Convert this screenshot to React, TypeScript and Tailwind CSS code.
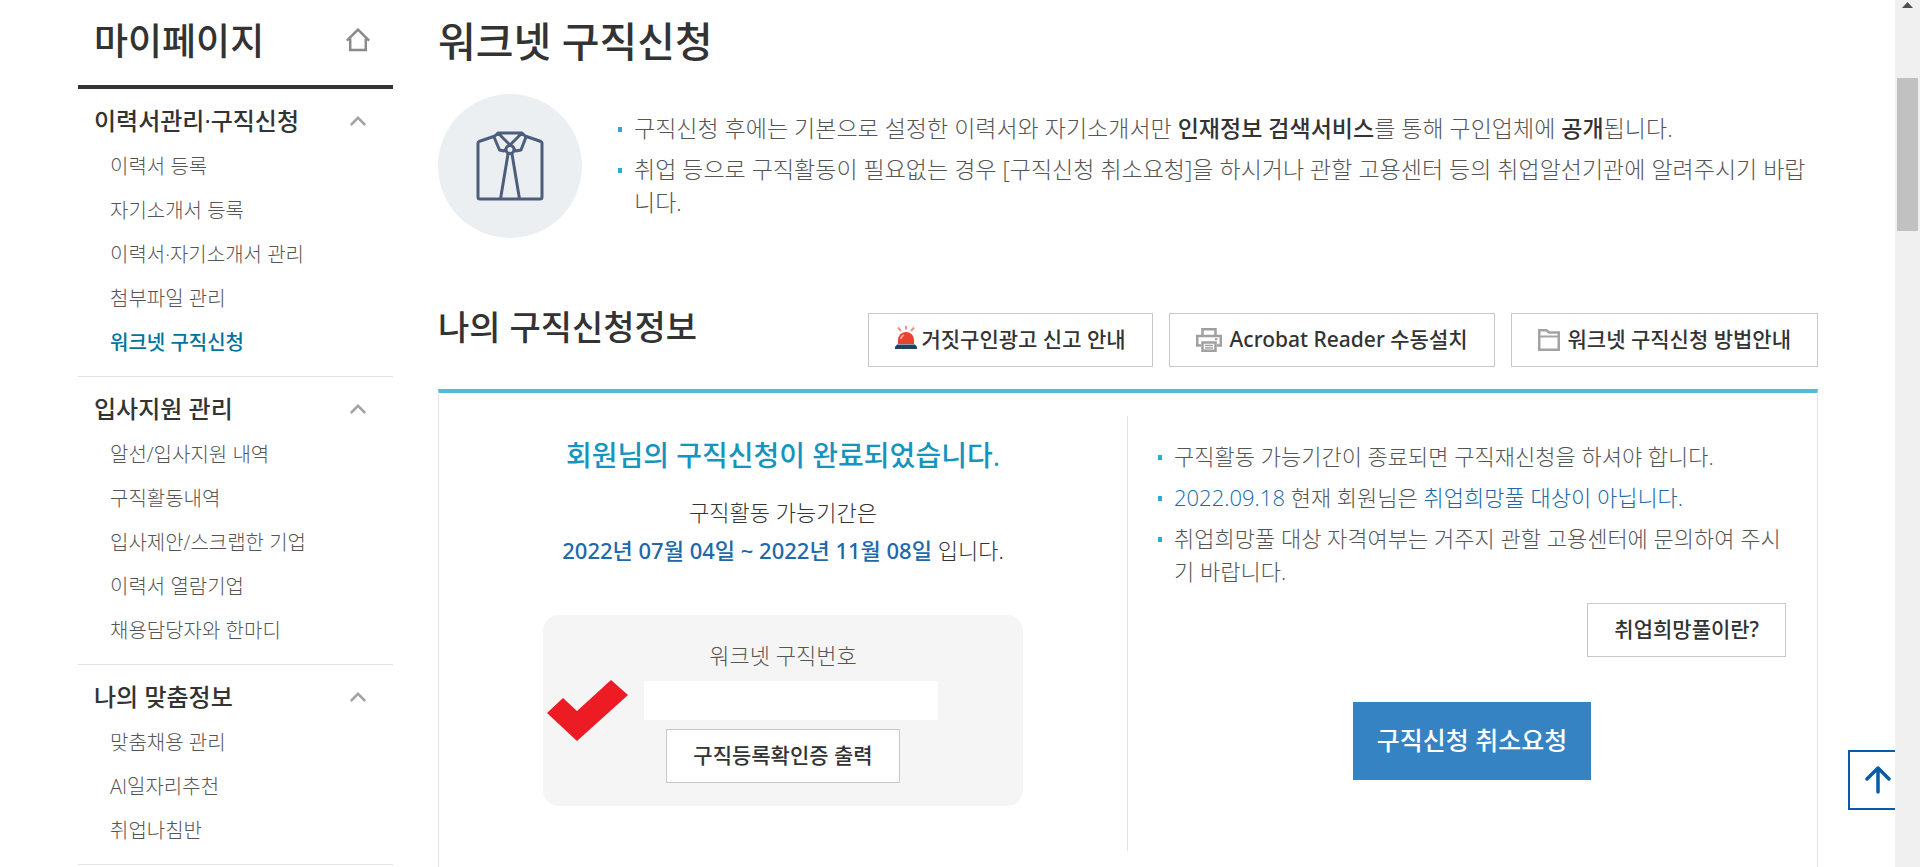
import type { ReactNode } from 'react';

type Section = { title: string; items: string[]; active?: string };

const sections: Section[] = [
  {
    title: '이력서관리·구직신청',
    items: ['이력서 등록', '자기소개서 등록', '이력서·자기소개서 관리', '첨부파일 관리', '워크넷 구직신청'],
    active: '워크넷 구직신청',
  },
  {
    title: '입사지원 관리',
    items: ['알선/입사지원 내역', '구직활동내역', '입사제안/스크랩한 기업', '이력서 열람기업', '채용담당자와 한마디'],
  },
  { title: '나의 맞춤정보', items: ['맞춤채용 관리', 'AI일자리추천', '취업나침반'] },
];

function HomeIcon() {
  return (
    <svg width="24" height="24" viewBox="0 0 24 24" fill="none" stroke="#8a8a8a" strokeWidth="2.500">
      <path d="M0.8 12.6 12 1.6 23.2 12.6" />
      <path d="M4.200 10.5V22h15.600V10.5" />
    </svg>
  );
}

function Chevron() {
  return (
    <svg width="16" height="10" viewBox="0 0 16 10" fill="none" stroke="#a3a3a3" strokeWidth="2.500">
      <path d="M0.8 9 8 1.8 15.2 9" />
    </svg>
  );
}

function ShirtIcon() {
  return (
    <svg width="68" height="70" viewBox="0 0 68 70" fill="none" stroke="#4d5d7c" strokeWidth="3" strokeLinejoin="round">
      <path d="M19 5 3 10.500Q2 11 2 12V66Q2 68 4 68H64Q66 68 66 66V12Q66 11 65 10.500L49 5" />
      <path d="M22 2H46L50 6 45 19 40 20 22 2 18 6 23.500 19 28 20 46 2" />
      <circle cx="34" cy="18.500" r="4" fill="#ebeff2" />
      <path d="M32 23 24.500 68M36 23 43.500 68" />
    </svg>
  );
}

function SirenIcon() {
  return (
    <svg width="22" height="24" viewBox="0 0 22 24">
      <path d="M3 1.500 6 5M19 1.500 16 5M11 0V3.500" stroke="#ef8f83" strokeWidth="2" fill="none" />
      <path d="M3 18V14a8 8 0 0 1 16 0v4z" fill="#e8432f" />
      <path d="M6 13a4.500 4.500 0 0 1 3-4" stroke="#f7a99f" strokeWidth="1.800" fill="none" />
      <path d="M2 18.500h18l2 2.500v2H0v-2z" fill="#1d4560" />
    </svg>
  );
}

function PrinterIcon() {
  return (
    <svg width="26" height="24" viewBox="0 0 26 24" fill="none" stroke="#a0a0a0" strokeWidth="2.500">
      <path d="M6.500 8V1.250h13V8" />
      <path d="M5 17.500H1.250V8h23.500v9.500H21" />
      <path d="M6.500 14.500h13v8.250h-13z" />
      <path d="M9 17.500h8M9 20h8" strokeWidth="1.500" />
      <path d="M19 11.200h2.500" strokeWidth="2" />
    </svg>
  );
}

function FolderIcon() {
  return (
    <svg width="22" height="22" viewBox="0 0 22 22" fill="none" stroke="#a3a3a3" strokeWidth="2.500">
      <path d="M1.250 20.750V1.250H8.500L11 3.500h9.750v17.250z" />
      <path d="M1 7.500h20" strokeWidth="2" />
    </svg>
  );
}

function OutlineButton({ icon, children }: { icon?: ReactNode; children: ReactNode }) {
  return (
    <button
      type="button"
      className="flex h-[54px] items-center border border-[#c8c8c8] bg-white px-[26px] font-['Noto_Sans','Noto_Sans_CJK_KR',sans-serif] text-[21px] font-medium whitespace-nowrap text-[#333]"
    >
      {icon}
      {children}
    </button>
  );
}

function Bullets({ items, className }: { items: ReactNode[]; className: string }) {
  return (
    <ul className={`flex flex-col gap-2 leading-[33px] text-[#555] ${className}`}>
      {items.map((item, i) => (
        <li key={i} className="flex gap-3 break-all">
          <span className="mt-[15px] h-[5px] w-1 shrink-0 bg-[#2fa9d4]" />
          <span>{item}</span>
        </li>
      ))}
    </ul>
  );
}

function Sidebar() {
  return (
    <aside className="w-[315px] shrink-0">
      <div className="flex h-[89px] items-start justify-between border-b-4 border-[#333] px-4 pt-4">
        <h2 className="text-[37px] leading-[50px] font-medium">마이페이지</h2>
        <a href="#home" aria-label="홈" className="mt-3 mr-[7px]">
          <HomeIcon />
        </a>
      </div>
      <nav>
        {sections.map((s) => (
          <section key={s.title} className="border-b border-[#e3e3e3] px-4 pt-4 pb-[11px]">
            <button type="button" className="flex w-full items-center justify-between pr-[11px]">
              <span className="text-[24px] leading-8 font-medium">{s.title}</span>
              <Chevron />
            </button>
            <ul className="mt-2 pl-4">
              {s.items.map((item) => (
                <li key={item} className="h-11 text-[20px] leading-[44px]">
                  <a href="#menu" className={item === s.active ? 'font-medium text-[#00759c]' : 'font-light text-[#555]'}>
                    {item}
                  </a>
                </li>
              ))}
            </ul>
          </section>
        ))}
      </nav>
    </aside>
  );
}

function StatusPanel() {
  return (
    <div className="flex w-1/2 flex-col items-center border-r border-[#e3e3e3] pt-4">
      <h4 className="text-[28px] leading-[46px] font-medium text-[#1594c0]">회원님의 구직신청이 완료되었습니다.</h4>
      <p className="mt-[15px] text-center font-['Noto_Sans','Noto_Sans_CJK_KR',sans-serif] text-[22px] leading-[38px] text-[#333]">
        <span className="font-light">구직활동 가능기간은</span>
        <br />
        <strong className="font-medium text-[#2068a9]">2022년 07월 04일 ~ 2022년 11월 08일</strong>
        <span className="font-light"> 입니다.</span>
      </p>
      <div className="relative mt-[46px] flex h-[191px] w-[480px] flex-col items-center rounded-2xl bg-[#f5f5f5] pt-6">
        <label htmlFor="number" className="text-[22px] leading-8 font-light text-[#555]">
          워크넷 구직번호
        </label>
        <div className="mt-[10px] pl-4">
          <input id="number" type="text" readOnly className="block h-[39px] w-[294px] bg-white" />
        </div>
        <div className="mt-[9px]">
          <OutlineButton>구직등록확인증 출력</OutlineButton>
        </div>
        <svg className="absolute top-[65px] left-1" width="81" height="61" viewBox="0 0 81 61" fill="#ed1c24">
          <path d="M0 33 16 18 30 31 64 0 81 15 30 61Z" />
        </svg>
      </div>
    </div>
  );
}

function NoticePanel() {
  return (
    <div className="flex w-1/2 flex-col pt-6 pr-[31px] pl-[30px]">
      <Bullets
        className="text-[22px] font-light"
        items={[
          '구직활동 가능기간이 종료되면 구직재신청을 하셔야 합니다.',
          <>
            <span className="text-[#2068a9]">2022.09.18</span> 현재 회원님은{' '}
            <span className="text-[#2068a9]">취업희망풀 대상이 아닙니다.</span>
          </>,
          '취업희망풀 대상 자격여부는 거주지 관할 고용센터에 문의하여 주시기 바랍니다.',
        ]}
      />
      <div className="mt-[15px] self-end">
        <OutlineButton>취업희망풀이란?</OutlineButton>
      </div>
      <button
        type="button"
        className="mt-[45px] h-[78px] self-center bg-[#3683c3] px-6 text-[25px] font-medium whitespace-nowrap text-white"
      >
        구직신청 취소요청
      </button>
    </div>
  );
}

export default function App() {
  return (
    <div className="flex h-screen overflow-hidden bg-white font-['Open_Sans','Noto_Sans_CJK_KR',sans-serif] text-[#333]">
      <div className="relative flex min-w-0 flex-1 gap-[45px] overflow-hidden pr-[77px] pl-[78px]">
        <Sidebar />
        <main className="min-w-0 flex-1 pt-3">
          <h1 className="text-[41px] leading-[58px] font-medium">워크넷 구직신청</h1>
          <div className="mt-6 flex gap-9">
            <div className="flex size-36 shrink-0 items-center justify-center rounded-full bg-[#ebeff2]">
              <ShirtIcon />
            </div>
            <Bullets
              className="mt-[18px] text-[23px] font-light"
              items={[
                <>
                  구직신청 후에는 기본으로 설정한 이력서와 자기소개서만{' '}
                  <strong className="font-medium text-[#333]">인재정보 검색서비스</strong>를 통해 구인업체에{' '}
                  <strong className="font-medium text-[#333]">공개</strong>됩니다.
                </>,
                '취업 등으로 구직활동이 필요없는 경우 [구직신청 취소요청]을 하시거나 관할 고용센터 등의 취업알선기관에 알려주시기 바랍니다.',
              ]}
            />
          </div>
          <div className="mt-[66px] flex items-start justify-between">
            <h3 className="text-[34px] leading-[46px] font-medium">나의 구직신청정보</h3>
            <div className="mt-[9px] flex gap-4">
              <OutlineButton icon={<span className="mr-1 mb-[5px]"><SirenIcon /></span>}>거짓구인광고 신고 안내</OutlineButton>
              <OutlineButton icon={<span className="mr-2"><PrinterIcon /></span>}>Acrobat Reader 수동설치</OutlineButton>
              <OutlineButton icon={<span className="mr-2"><FolderIcon /></span>}>워크넷 구직신청 방법안내</OutlineButton>
            </div>
          </div>
          <div className="mt-[22px] flex h-[520px] items-start border-x border-t-4 border-x-[#e3e3e3] border-t-[#54b8d8] pt-[23px]">
            <div className="flex h-[435px] w-full">
              <StatusPanel />
              <NoticePanel />
            </div>
          </div>
        </main>
        <a
          href="#top"
          aria-label="맨 위로"
          className="absolute right-[-13px] bottom-[57px] flex h-[60px] w-[60px] items-center justify-center border-2 border-[#0a5ba5] bg-white"
        >
          <svg width="26" height="28" viewBox="0 0 26 28" fill="none" stroke="#0a5ba5" strokeWidth="3.500" strokeLinecap="round" strokeLinejoin="round">
            <path d="M13 26V2M2 13 13 2 24 13" />
          </svg>
        </a>
      </div>
      <div className="flex w-[25px] shrink-0 flex-col items-center bg-[#f0f0f0] pt-[2px]" aria-hidden="true">
        <svg width="11" height="6" viewBox="0 0 11 6" fill="#505050">
          <path d="M5.500 0 11 6H0Z" />
        </svg>
        <div className="mt-[70px] h-[153px] w-[21px] bg-[#c1c1c1]" />
      </div>
    </div>
  );
}
